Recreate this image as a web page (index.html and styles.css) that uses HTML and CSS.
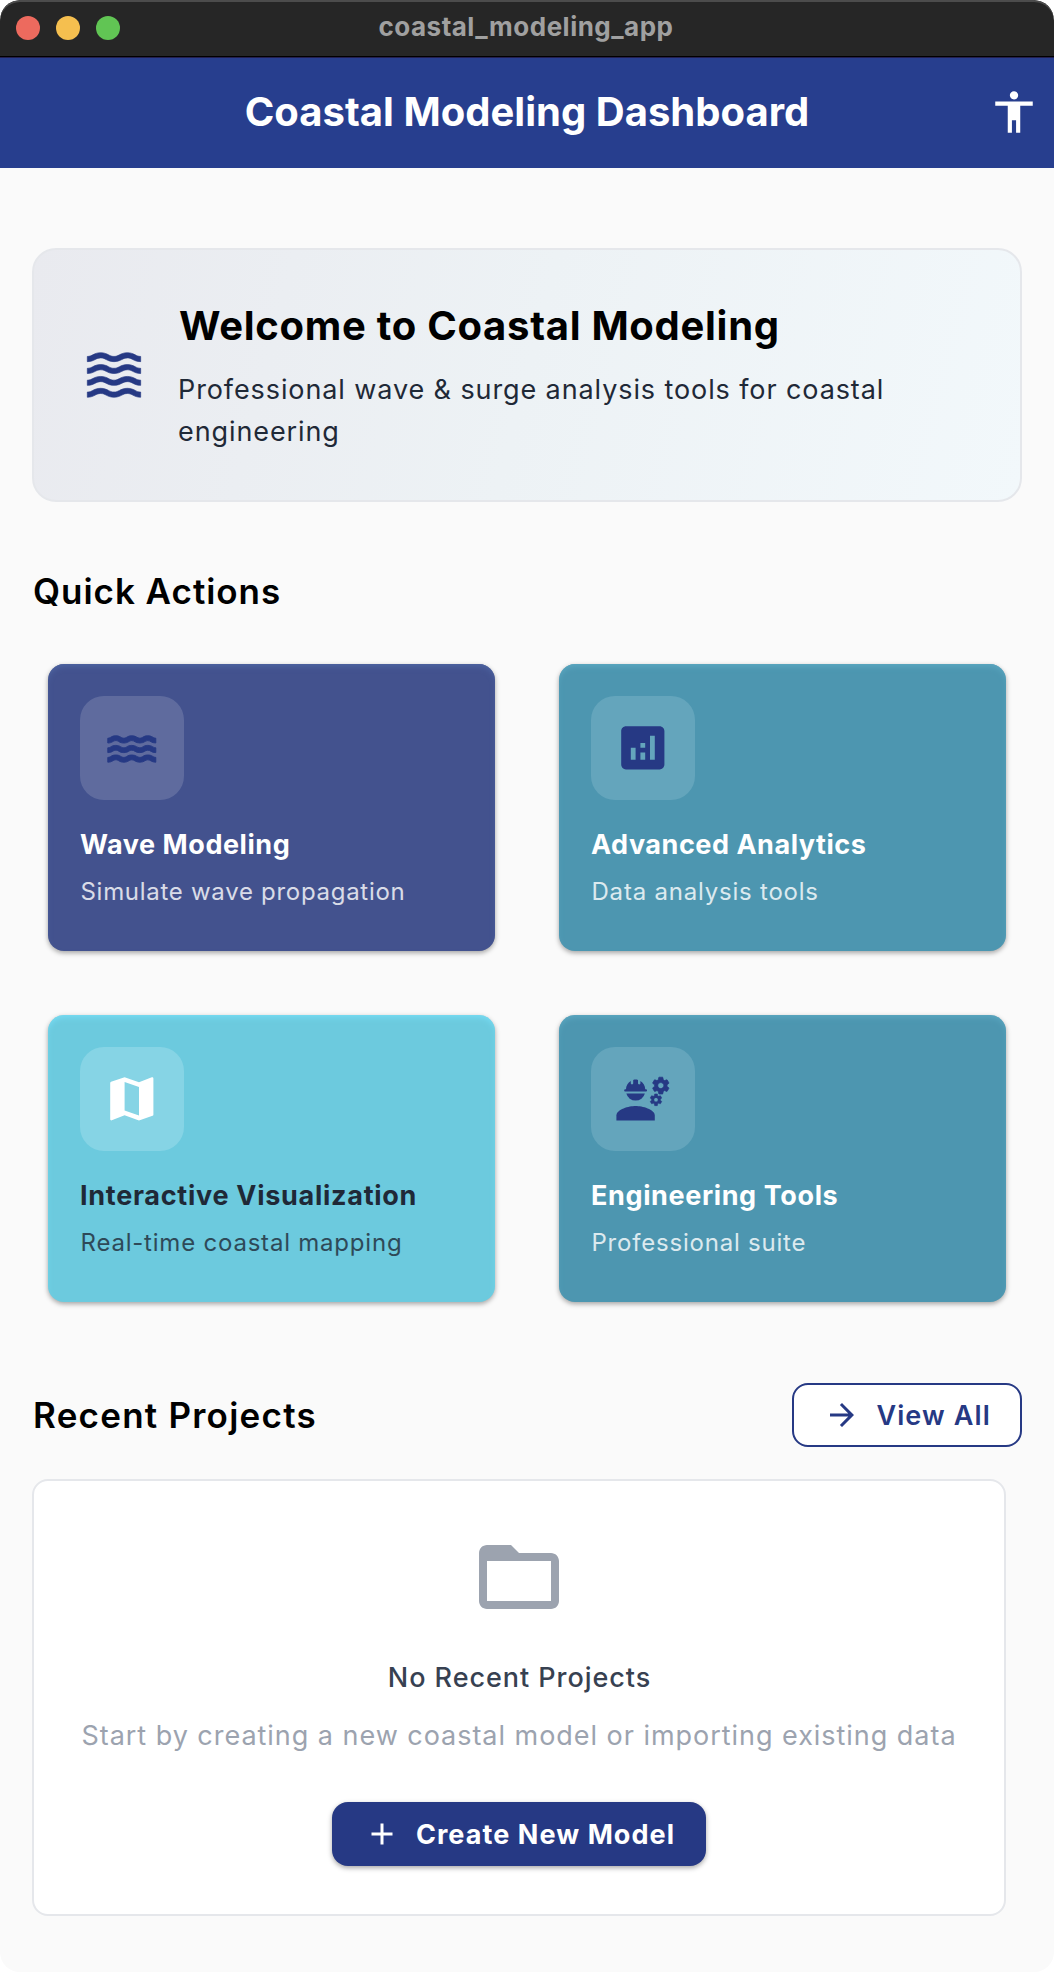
FILE: index.html
```html
<!DOCTYPE html>
<html lang="en">
<head>
<meta charset="utf-8">
<title>coastal_modeling_app</title>
<link rel="stylesheet" href="styles.css">
</head>
<body>
<div class="window">
  <div class="titlebar">
    <div class="lights">
      <span class="light light-close"></span>
      <span class="light light-min"></span>
      <span class="light light-max"></span>
    </div>
    <div class="window-name">coastal_modeling_app</div>
  </div>

  <header class="appbar">
    <h1 class="appbar-title">Coastal Modeling Dashboard</h1>
    <svg class="appbar-icon" viewBox="0 0 24 24"><path d="M12 2c1.1 0 2 .9 2 2s-.9 2-2 2-2-.9-2-2 .9-2 2-2zm9 7h-6v13h-2v-6h-2v6H9V9H3V7h18v2z"/></svg>
  </header>

  <main class="content">
    <section class="hero">
      <svg class="hero-icon" viewBox="0 0 24 24">
        <defs>
          <path id="swell" d="M17 16.99c-1.35 0-2.2.42-2.95.8-.65.33-1.18.6-2.05.6-.9 0-1.4-.25-2.05-.6-.75-.38-1.57-.8-2.95-.8s-2.2.42-2.95.8c-.65.33-1.17.6-2.05.6v1.95c1.35 0 2.2-.42 2.95-.8.65-.33 1.17-.6 2.05-.6s1.4.25 2.05.6c.75.38 1.57.8 2.95.8s2.2-.42 2.95-.8c.65-.33 1.18-.6 2.05-.6.9 0 1.4.25 2.05.6.75.38 1.58.8 2.95.8v-1.95c-.9 0-1.4-.25-2.05-.6-.75-.38-1.6-.8-2.95-.8z"/>
        </defs>
        <use href="#swell"/>
        <use href="#swell" y="-4.45"/>
        <use href="#swell" y="-8.9"/>
        <use href="#swell" y="-13.35"/>
      </svg>
      <div class="hero-text">
        <h2 class="hero-title">Welcome to Coastal Modeling</h2>
        <p class="hero-sub">Professional wave &amp; surge analysis tools for coastal engineering</p>
      </div>
    </section>

    <h2 class="section-title quick-title">Quick Actions</h2>

    <section class="actions">
      <article class="action action-indigo">
        <div class="action-badge">
          <svg class="action-icon icon-water" viewBox="0 0 24 24">
            <defs>
              <path id="ripple" d="M18.67 15c-1.95 0-2.09 1-3.33 1-1.19 0-1.42-1-3.33-1-1.95 0-2.1 1-3.34 1-1.24 0-1.38-1-3.33-1-1.95 0-2.1 1-3.34 1v2c1.95 0 2.11-1 3.34-1 1.24 0 1.38 1 3.33 1 1.95 0 2.1-1 3.34-1 1.19 0 1.42 1 3.33 1 1.94 0 2.09-1 3.33-1 1.19 0 1.42 1 3.33 1v-2c-1.24 0-1.38-1-3.33-1z"/>
            </defs>
            <use href="#ripple"/>
            <use href="#ripple" y="-4"/>
            <use href="#ripple" y="-8"/>
          </svg>
        </div>
        <h3 class="action-title title-wave">Wave Modeling</h3>
        <p class="action-sub sub-wave">Simulate wave propagation</p>
      </article>

      <article class="action action-teal">
        <div class="action-badge">
          <svg class="action-icon" viewBox="0 0 24 24"><path d="M19 3H5c-1.1 0-2 .9-2 2v14c0 1.1.9 2 2 2h14c1.1 0 2-.9 2-2V5c0-1.1-.9-2-2-2zM9 17H7v-5h2v5zm4 0h-2v-3h2v3zm0-5h-2v-2h2v2zm4 5h-2V7h2v10z"/></svg>
        </div>
        <h3 class="action-title title-analytics">Advanced Analytics</h3>
        <p class="action-sub">Data analysis tools</p>
      </article>

      <article class="action action-aqua">
        <div class="action-badge">
          <svg class="action-icon" viewBox="0 0 24 24"><path d="M20.5 3l-.16.03L15 5.1 9 3 3.36 4.9c-.21.07-.36.25-.36.48V20.5c0 .28.22.5.5.5l.16-.03L9 18.9l6 2.1 5.64-1.9c.21-.07.36-.25.36-.48V3.5c0-.28-.22-.5-.5-.5zM15 19l-6-2.11V5l6 2.11V19z"/></svg>
        </div>
        <h3 class="action-title title-map">Interactive Visualization</h3>
        <p class="action-sub">Real-time coastal mapping</p>
      </article>

      <article class="action action-teal">
        <div class="action-badge">
          <svg class="action-icon" viewBox="0 0 24 24">
            <defs>
              <path id="gear" d="M22.1 6.84c.01-.11.02-.22.02-.34s-.01-.23-.03-.34l.74-.58c.07-.05.08-.15.04-.22l-.7-1.21c-.04-.08-.14-.1-.21-.08l-.86.35c-.18-.14-.38-.25-.59-.34l-.13-.93C20.36 3.06 20.29 3 20.2 3h-1.4c-.09 0-.16.06-.17.15l-.13.93c-.21.09-.41.21-.59.34l-.87-.35c-.08-.03-.17 0-.21.08l-.7 1.21c-.04.08-.03.17.04.22l.74.58c-.02.11-.03.23-.03.34s.01.23.03.34l-.74.58c-.07.05-.08.15-.04.22l.7 1.21c.04.08.14.1.21.08l.87-.35c.18.14.38.25.59.34l.13.93c.01.09.08.15.17.15h1.4c.09 0 .16-.06.17-.15l.13-.93c.21-.09.41-.21.59-.34l.87.35c.08.03.17 0 .21-.08l.7-1.21c.04-.08.03-.17-.04-.22l-.73-.58zM19.5 7.75c-.69 0-1.25-.56-1.25-1.25s.56-1.25 1.25-1.25 1.25.56 1.25 1.25-.56 1.25-1.25 1.25z"/>
            </defs>
            <path d="M9 15c-2.67 0-8 1.34-8 4v2h16v-2c0-2.66-5.33-4-8-4z"/>
            <path d="M4.74 9h8.52c.27 0 .49-.22.49-.49v-.02c0-.27-.22-.49-.49-.49H13c0-1.48-.81-2.75-2-3.45v.95c0 .28-.22.5-.5.5s-.5-.22-.5-.5V4.14C9.68 4.06 9.35 4 9 4s-.68.06-1 .14V5.5c0 .28-.22.5-.5.5S7 5.78 7 5.5v-.95C5.81 5.25 5 6.52 5 8h-.26c-.27 0-.49.22-.49.49v.03c0 .26.22.48.49.48z"/>
            <path d="M5.14 9.8h7.72a4 4 0 0 1-7.72 0z"/>
            <g class="gears">
              <use href="#gear"/>
              <use href="#gear" transform="translate(17.5 12.4) scale(.7) translate(-19.5 -6.5)"/>
            </g>
          </svg>
        </div>
        <h3 class="action-title title-tools">Engineering Tools</h3>
        <p class="action-sub">Professional suite</p>
      </article>
    </section>

    <div class="recent-head">
      <h2 class="section-title recent-title">Recent Projects</h2>
      <button class="btn btn-outline">
        <svg class="btn-icon" viewBox="0 0 24 24"><path d="M12 4l-1.41 1.41L16.17 11H4v2h12.17l-5.58 5.59L12 20l8-8z"/></svg>
        <span>View All</span>
      </button>
    </div>

    <section class="empty">
      <svg class="empty-icon" viewBox="0 0 24 24"><path d="M20 6h-8l-2-2H4c-1.1 0-1.99.9-1.99 2L2 18c0 1.1.9 2 2 2h16c1.1 0 2-.9 2-2V8c0-1.1-.9-2-2-2zm0 12H4V8h16v10z"/></svg>
      <h3 class="empty-title">No Recent Projects</h3>
      <p class="empty-sub">Start by creating a new coastal model or importing existing data</p>
      <button class="btn btn-filled">
        <svg class="btn-icon" viewBox="0 0 24 24"><path d="M19 13h-6v6h-2v-6H5v-2h6V5h2v6h6v2z"/></svg>
        <span>Create New Model</span>
      </button>
    </section>
  </main>
</div>
</body>
</html>
```
FILE: styles.css
```css
* { box-sizing: border-box; }

body {
  margin: 0;
  background: #fff;
  font-family: Inter, "Liberation Sans", sans-serif;
}

h1, h2, h3, p { margin: 0; }
svg { display: block; fill: currentColor; flex: none; }

.window {
  width: 1054px;
  height: 1972px;
  border-radius: 20px;
  overflow: hidden;
  background: #fafafa;
}

/* Window chrome */
.titlebar {
  display: grid;
  grid-template-columns: 1fr auto 1fr;
  align-items: center;
  height: 57px;
  padding: 0 18px 0 16px;
  background: #262626;
  border-bottom: 1px solid #000;
  border-radius: 20px 20px 0 0;
  box-shadow: inset 0 2px 0 #4c4c4c;
}
.lights { display: flex; gap: 16px; }
.light { width: 24px; height: 24px; border-radius: 50%; }
.light-close { background: #ed6a5e; }
.light-min { background: #f5bf4f; }
.light-max { background: #61c554; }
.window-name {
  padding-bottom: 3px;
  color: #a0a0a0;
  font-size: 26px;
  font-weight: 700;
  line-height: 32px;
  letter-spacing: 0.485px;
}

/* App bar */
.appbar {
  display: grid;
  grid-template-columns: 1fr auto 1fr;
  align-items: center;
  height: 111px;
  padding: 0 15px;
  background: #273e8e;
  border-top: 1px solid #241f50;
  color: #fff;
}
.appbar-title {
  grid-column: 2;
  padding-bottom: 2px;
  font-size: 40px;
  font-weight: 650;
  line-height: 48px;
  letter-spacing: 0.02px;
}
.appbar-icon { width: 50px; height: 50px; margin-bottom: 2px; justify-self: end; }

.content { padding: 80px 32px 0; }

/* Welcome banner */
.hero {
  display: flex;
  align-items: center;
  gap: 32px;
  height: 254px;
  padding: 0 48px;
  border: 2px solid #e5e7eb;
  border-radius: 24px;
  background: linear-gradient(104.4deg, #e9eaef 0%, #edf2f5 50%, #f2f8fb 100%);
}
.hero-icon {
  width: 64px;
  height: 64px;
  color: #263984;
  stroke: currentColor;
  stroke-width: 0.25;
}
.hero-text { flex: 1; padding-top: 1px; }
.hero-title {
  margin-bottom: 16px;
  padding-left: 1px;
  color: #000;
  font-size: 40px;
  font-weight: 700;
  line-height: 54px;
  letter-spacing: 0.713px;
}
.hero-sub {
  color: #1f2937;
  font-size: 27px;
  line-height: 42px;
  letter-spacing: 0.9px;
}

.section-title {
  padding-left: 1px;
  color: #000;
  font-size: 35px;
  font-weight: 600;
  line-height: 48px;
}
.quick-title { margin: 65px 0 49px; letter-spacing: 0.972px; }

/* Quick action tiles */
.actions {
  display: grid;
  grid-template-columns: 1fr 1fr;
  gap: 64px;
  padding: 0 16px;
}
.action {
  height: 287px;
  padding: 32px;
  border-radius: 16px;
  color: #fff;
}
.action-indigo {
  background: #43528e;
  box-shadow: 0 2px 5px rgba(0, 0, 0, 0.35), inset 0 4px 6px -2px #4f67a4;
}
.action-teal {
  background: #4d96b0;
  box-shadow: 0 2px 5px rgba(0, 0, 0, 0.35), inset 0 4px 6px -2px #5ca9c3;
}
.action-aqua {
  background: #6ccade;
  box-shadow: 0 2px 5px rgba(0, 0, 0, 0.35), inset 0 4px 6px -2px #78def6;
  color: #1f2937;
}
.action-badge {
  display: flex;
  align-items: center;
  justify-content: center;
  width: 104px;
  height: 104px;
  margin-bottom: 25px;
  border-radius: 24px;
  background: rgba(255, 255, 255, 0.15);
  color: #263984;
}
.action-teal .action-badge { background: #64a5bc; }
.action-aqua .action-badge { background: #86d4e5; color: #fff; }
.action-icon { width: 57.6px; height: 57.6px; }
.icon-water { stroke: currentColor; stroke-width: 0.4; }
.gears { stroke: currentColor; stroke-width: 0.3; }
.action-title {
  font-size: 27px;
  font-weight: 650;
  line-height: 40px;
}
.title-wave { letter-spacing: 0.55px; }
.title-analytics { letter-spacing: 0.53px; }
.title-map { letter-spacing: 0.72px; }
.title-tools { letter-spacing: 0.62px; }
.action-sub {
  margin-top: 9px;
  padding-left: 0.5px;
  font-size: 24px;
  line-height: 36px;
  letter-spacing: 0.79px;
  opacity: 0.8;
}
.sub-wave { letter-spacing: 0.71px; }

/* Recent projects */
.recent-head {
  display: flex;
  align-items: center;
  justify-content: space-between;
  margin: 81px 0 32px;
}
.recent-title { letter-spacing: 1.24px; }

.btn {
  display: flex;
  align-items: center;
  gap: 16px;
  height: 64px;
  border-radius: 16px;
  font-family: inherit;
  font-size: 27px;
  font-weight: 600;
  line-height: 40px;
  white-space: nowrap;
}
.btn span { padding-top: 1px; }
.btn-icon { width: 36px; height: 36px; }
.btn-outline {
  padding: 0 29px 0 30px;
  border: 2px solid #263984;
  background: #fff;
  color: #263984;
  letter-spacing: 1.137px;
}
.btn-filled {
  padding: 0 31px 0 32px;
  border: 0;
  background: #263984;
  box-shadow: 0 2px 5px rgba(0, 0, 0, 0.35);
  color: #fff;
  font-weight: 650;
  letter-spacing: 1.06px;
}

.empty {
  display: flex;
  flex-direction: column;
  align-items: center;
  width: 974px;
  height: 437px;
  padding-top: 48px;
  border: 2px solid #e5e7eb;
  border-radius: 16px;
  background: #fff;
}
.empty-icon { width: 96px; height: 96px; color: #9ca3af; }
.empty-title {
  margin-top: 33px;
  padding-left: 1px;
  color: #374151;
  font-size: 27px;
  font-weight: 500;
  line-height: 40px;
  letter-spacing: 0.95px;
}
.empty-sub {
  margin: 17px 0 45px;
  color: #9ca3af;
  font-size: 27px;
  line-height: 42px;
  letter-spacing: 0.965px;
}
```
